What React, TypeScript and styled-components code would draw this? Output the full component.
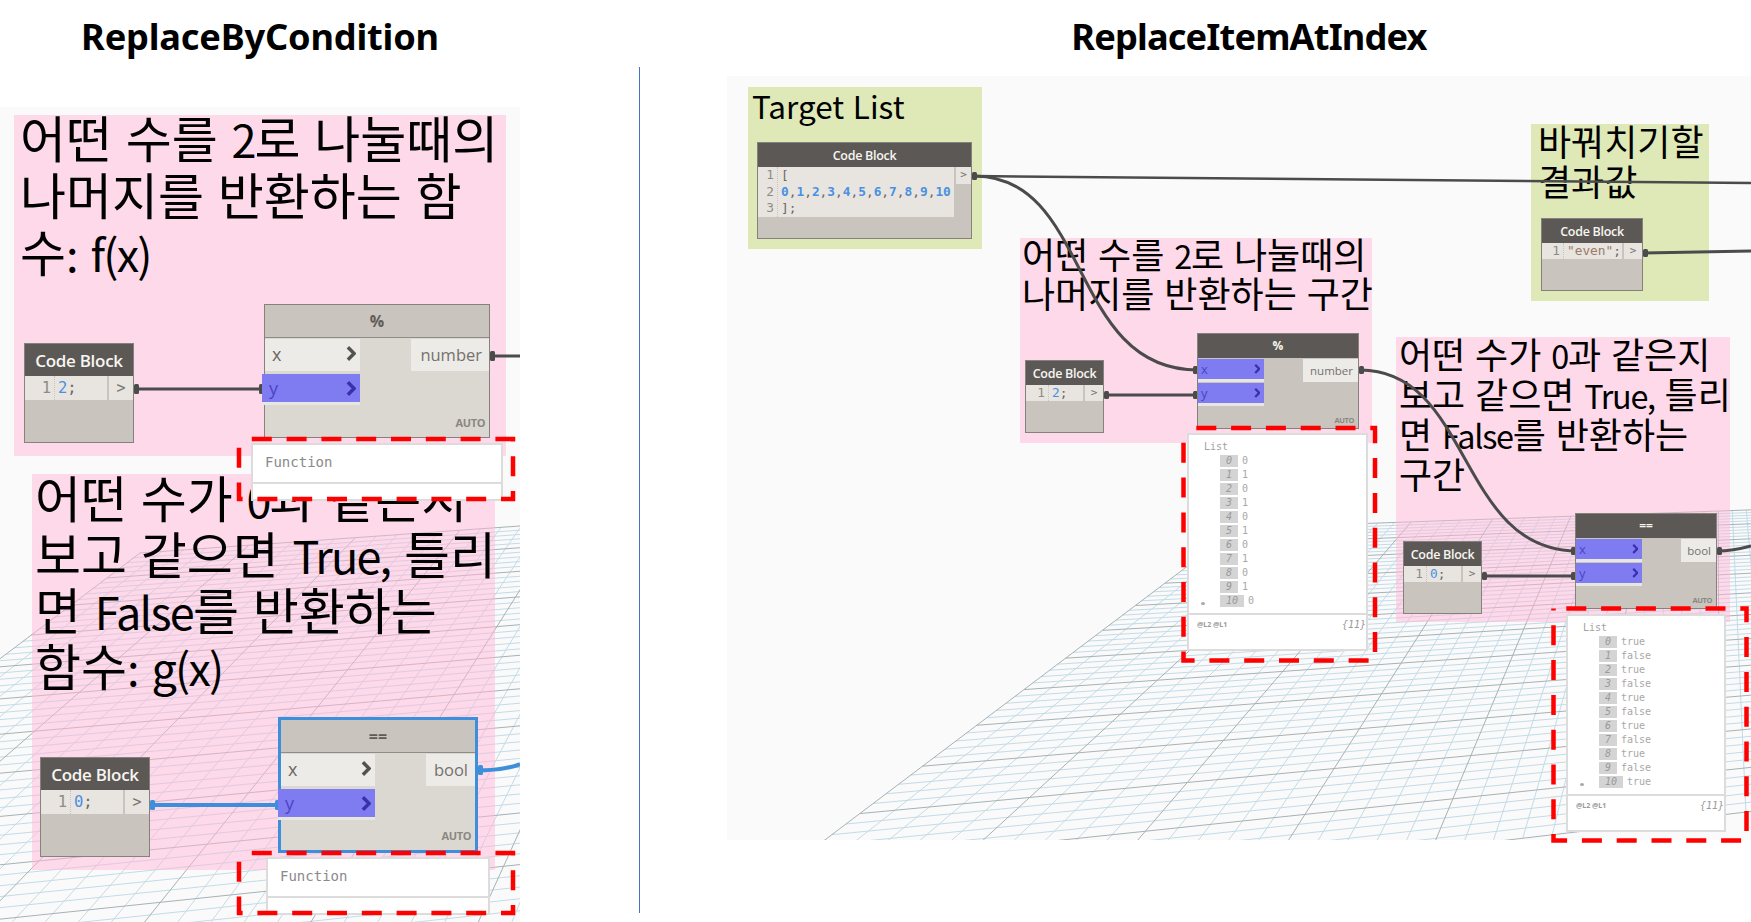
import React, { useMemo } from "react";
import styled, { createGlobalStyle } from "styled-components";

const GlobalStyle = createGlobalStyle`
  html, body { margin: 0; padding: 0; background: #ffffff; overflow: hidden; }
  #root { width: 1751px; height: 922px; overflow: hidden; }
`;

const UI = `"Open Sans", "Noto Sans CJK KR", sans-serif`;
const MONO = `"DejaVu Sans Mono", "Noto Sans CJK KR", monospace`;

const Page = styled.main`
  display: flex;
  width: 1751px;
  height: 922px;
  background: #fff;
`;
const Column = styled.section<{ $w: number }>`
  display: flex;
  flex-direction: column;
  flex: none;
  width: ${(p) => p.$w}px;
`;
const TitleBar = styled.header<{ $h: number; $pl?: number }>`
  flex: none;
  height: ${(p) => p.$h}px;
  padding: 11px 0 0 ${(p) => p.$pl ?? 0}px;
  box-sizing: border-box;
`;
const Title = styled.h1<{ $ls: number }>`
  margin: 0;
  font: 700 36.2px/50px "Noto Sans", sans-serif;
  color: #000;
  text-align: center;
  letter-spacing: ${(p) => p.$ls}px;
`;
const Divider = styled.div`
  flex: none;
  width: 1px;
  height: 846px;
  margin: 67px 87px 0 119px;
  background: #4472c4;
`;
const Canvas = styled.div<{ $h: number }>`
  position: relative;
  flex: none;
  height: ${(p) => p.$h}px;
  background: #fafafa;
`;
const Layer = styled.svg<{ $top?: boolean }>`
  position: absolute;
  inset: 0;
  width: 100%;
  height: 100%;
  pointer-events: none;
  overflow: ${(p) => (p.$top ? "visible" : "hidden")};
  z-index: ${(p) => (p.$top ? 5 : 2)};
`;
const Note = styled.div<{ $x: number; $y: number; $w: number; $h: number; $green?: boolean }>`
  position: absolute;
  left: ${(p) => p.$x}px;
  top: ${(p) => p.$y}px;
  width: ${(p) => p.$w}px;
  height: ${(p) => p.$h}px;
  background: ${(p) => (p.$green ? "#dfe9b7" : "rgba(255,184,216,0.5)")};
  z-index: 1;
`;
const NoteText = styled.div<{ $fs: number; $lh: number; $pl: number; $mt: number }>`
  margin-top: ${(p) => p.$mt}px;
  padding-left: ${(p) => p.$pl}px;
  font-family: "Noto Sans CJK KR", sans-serif;
  font-size: ${(p) => p.$fs}px;
  line-height: ${(p) => p.$lh}px;
  word-spacing: 0.05em;
  color: #000;
  white-space: nowrap;
`;
const NoteLine = styled.div`
  height: 1lh;
`;
const Latin = styled.span`
  font-size: 0.9em;
  line-height: 0;
  letter-spacing: -0.04em;
`;

/* ---- Code block node ---- */
const CodeShell = styled.div<{ $x: number; $y: number; $w: number; $h: number }>`
  position: absolute;
  left: ${(p) => p.$x}px;
  top: ${(p) => p.$y}px;
  width: ${(p) => p.$w}px;
  height: ${(p) => p.$h}px;
  box-sizing: border-box;
  display: flex;
  flex-direction: column;
  background: #c9c5be;
  border: 1.5px solid #85827d;
  z-index: 3;
`;
const CodeHead = styled.div<{ $h: number; $fs: number }>`
  flex: none;
  height: ${(p) => p.$h}px;
  background: #5c5855;
  color: #f7f5f0;
  font: 600 ${(p) => p.$fs}px/${(p) => p.$h + 1}px ${UI};
  letter-spacing: -0.3px;
  text-align: center;
`;
const CodeRow = styled.div`
  display: flex;
  align-items: flex-start;
`;
const Editor = styled.div<{ $fs: number; $lh: number; $mr: number }>`
  flex: 1;
  margin-right: ${(p) => p.$mr}px;
  display: flex;
  background: #e8e4e0;
  font: 400 ${(p) => p.$fs}px/${(p) => p.$lh}px ${MONO};
`;
const Gutter = styled.div<{ $w: number }>`
  flex: none;
  width: ${(p) => p.$w}px;
  padding-right: 3px;
  box-sizing: border-box;
  text-align: right;
  color: #8f8b85;
  border-right: 1px dotted #c8c4be;
`;
const Code = styled.div`
  padding-left: 3px;
  color: #6b6763;
  white-space: pre;
`;
const Num = styled.span`
  color: #4a90e2;
`;
const BoldNum = styled(Num)`
  font-weight: 600;
`;
const Str = styled.span`
  color: #9a7b66;
`;
const RunButton = styled.div<{ $w: number; $lh: number; $fs: number }>`
  flex: none;
  width: ${(p) => p.$w}px;
  height: ${(p) => p.$lh}px;
  background: #e8e4e0;
  color: #77736e;
  text-align: center;
  font: 400 ${(p) => p.$fs}px/${(p) => p.$lh}px ${MONO};
`;

/* ---- Function node ---- */
const FnShell = styled.div<{
  $x: number; $y: number; $w: number; $h: number; $dark?: boolean; $selected?: boolean;
}>`
  position: absolute;
  left: ${(p) => p.$x}px;
  top: ${(p) => p.$y}px;
  width: ${(p) => p.$w}px;
  height: ${(p) => p.$h}px;
  box-sizing: border-box;
  display: flex;
  flex-direction: column;
  background: ${(p) => (p.$dark ? "#c9c5be" : "#dbd8d2")};
  border: ${(p) => (p.$selected ? "3px solid #3d8fdc" : "1.5px solid #85827d")};
  z-index: 3;
`;
const FnHead = styled.div<{ $h: number; $dark?: boolean; $fs: number }>`
  flex: none;
  height: ${(p) => p.$h}px;
  background: ${(p) => (p.$dark ? "#5c5855" : "#c9c5be")};
  border-bottom: ${(p) => (p.$dark ? "none" : "1.5px solid #8f8c86")};
  box-sizing: border-box;
  color: ${(p) => (p.$dark ? "#f7f5f0" : "#5f5b57")};
  font: 700 ${(p) => p.$fs}px/${(p) => p.$h}px ${UI};
  text-align: center;
`;
const FnBody = styled.div<{ $pt: number }>`
  flex: 1;
  position: relative;
  display: flex;
  justify-content: space-between;
  align-items: flex-start;
  padding-top: ${(p) => p.$pt}px;
`;
const Inputs = styled.div<{ $w: number; $big?: boolean }>`
  flex: none;
  width: ${(p) => p.$w}px;
  display: flex;
  flex-direction: column;
  gap: ${(p) => (p.$big ? 3 : 1)}px;
`;
const Port = styled.div<{ $active?: boolean; $h: number; $fs: number; $big?: boolean }>`
  display: flex;
  align-items: center;
  justify-content: space-between;
  box-sizing: content-box;
  height: ${(p) => p.$h}px;
  margin-left: ${(p) => (p.$active && p.$big ? -3 : 0)}px;
  padding: 0 4px 0 ${(p) => (p.$big ? 7 : 3)}px;
  background: ${(p) => (p.$active ? "#7f7cf2" : "#ecebe7")};
  border-bottom: 3px solid ${(p) => (p.$active ? "#e8e6e1" : "#ecebe7")};
  color: ${(p) => (p.$active ? "#4b45c4" : "#6c6864")};
  font: 400 ${(p) => p.$fs}px/1 ${UI};
`;
const Chevron = styled.svg<{ $active?: boolean }>`
  flex: none;
  color: ${(p) => (p.$active ? "#3a30ad" : "#55524e")};
`;
const OutPort = styled.div<{ $w: number; $h: number; $fs: number; $big?: boolean }>`
  flex: none;
  width: ${(p) => p.$w}px;
  height: ${(p) => p.$h}px;
  box-sizing: border-box;
  padding-right: ${(p) => (p.$big ? 7 : 5)}px;
  background: #ecebe7;
  color: #75716d;
  font: 400 ${(p) => p.$fs}px/${(p) => p.$h}px ${UI};
  text-align: right;
`;
const Auto = styled.span<{ $fs: number; $b: number }>`
  position: absolute;
  right: 4px;
  bottom: ${(p) => p.$b}px;
  color: #8a8781;
  font: 700 ${(p) => p.$fs}px/1 ${UI};
  letter-spacing: -0.4px;
`;

/* ---- Preview bubbles ---- */
const Preview = styled.div<{ $x: number; $y: number; $w: number; $h: number }>`
  position: absolute;
  left: ${(p) => p.$x}px;
  top: ${(p) => p.$y}px;
  width: ${(p) => p.$w}px;
  height: ${(p) => p.$h}px;
  box-sizing: border-box;
  display: flex;
  flex-direction: column;
  background: #fff;
  border: 2px solid #dcdcdc;
  z-index: 4;
`;
const PreviewMain = styled.div<{ $h: number }>`
  flex: none;
  height: ${(p) => p.$h}px;
  box-sizing: border-box;
  border-bottom: 2px solid #dcdcdc;
`;
const FnLabel = styled.div`
  padding-left: 12px;
  color: #8a8a8a;
  font: 400 14px/34px ${MONO};
`;
const ListHead = styled.div`
  padding: 5px 0 0 15px;
  color: #a3a3a3;
  font: 400 10px/14px ${MONO};
`;
const ListRow = styled.div`
  display: flex;
  align-items: center;
  height: 14px;
  color: #a8a8a8;
  font: 400 10px/14px ${MONO};
`;
const Slot = styled.div`
  flex: none;
  width: 31px;
  padding-left: 12px;
  box-sizing: border-box;
  display: flex;
  align-items: center;
`;
const Dot = styled.i`
  width: 4px;
  height: 3px;
  margin-top: 5px;
  border-radius: 50%;
  background: #a8a8a8;
`;
const Chip = styled.span<{ $wide?: boolean }>`
  flex: none;
  width: ${(p) => (p.$wide ? 24 : 18)}px;
  height: 12px;
  margin-right: 4px;
  background: #d4d4d4;
  color: #9a9a9a;
  font: italic 400 10px/12px ${MONO};
  text-align: center;
`;
const ListFoot = styled.div`
  display: flex;
  justify-content: space-between;
  align-items: center;
  padding: 4px 0 0 8px;
  color: #9a9a9a;
`;
const Levels = styled.span`
  font: 700 7px/12px ${UI};
`;
const Count = styled.span`
  font: italic 400 10px/12px ${MONO};
`;

/* ---- Helpers ---- */
type Pt = [number, number];

function groundPaths(a: Pt, b: Pt, c: Pt, d: Pt, nu: number, nv: number) {
  // unit square -> quad (u along a-b, v along a-d)
  const [x0, y0] = a, [x1, y1] = b, [x2, y2] = c, [x3, y3] = d;
  const dx1 = x1 - x2, dx2 = x3 - x2, dx3 = x0 - x1 + x2 - x3;
  const dy1 = y1 - y2, dy2 = y3 - y2, dy3 = y0 - y1 + y2 - y3;
  const den = dx1 * dy2 - dx2 * dy1;
  const g = (dx3 * dy2 - dx2 * dy3) / den;
  const h = (dx1 * dy3 - dx3 * dy1) / den;
  const A = x1 - x0 + g * x1, B = x3 - x0 + h * x3;
  const D = y1 - y0 + g * y1, E = y3 - y0 + h * y3;
  const map = (u: number, v: number) => {
    const w = g * u + h * v + 1;
    return `${((A * u + B * v + x0) / w).toFixed(1)} ${((D * u + E * v + y0) / w).toFixed(1)}`;
  };
  let minor = "", major = "";
  for (let i = 0; i <= nu; i++) {
    const s = `M${map(i / nu, 0)}L${map(i / nu, 1)}`;
    if (i % 5 === 0) major += s; else minor += s;
  }
  for (let j = 0; j <= nv; j++) {
    const s = `M${map(0, j / nv)}L${map(1, j / nv)}`;
    if (j % 5 === 0) major += s; else minor += s;
  }
  return { minor, major };
}

const Ground: React.FC<{ box: string; a: Pt; b: Pt; c: Pt; d: Pt }> = ({ box, a, b, c, d }) => {
  const { minor, major } = useMemo(() => groundPaths(a, b, c, d, 80, 60), [a, b, c, d]);
  return (
    <Layer viewBox={box} style={{ zIndex: 0 }}>
      <path d={minor} fill="none" stroke="#c3dbe8" strokeWidth="1" />
      <path d={major} fill="none" stroke="#a5b2b6" strokeWidth="1" />
    </Layer>
  );
};

const Wire: React.FC<{ d: string; c?: string; w?: number }> = ({ d, c = "#4b4b4b", w = 3 }) => (
  <path d={d} fill="none" stroke={c} strokeWidth={w} />
);
const Pin: React.FC<{ x: number; y: number; c?: string; h?: number }> = ({ x, y, c = "#4b4b4b", h = 10 }) => (
  <rect x={x} y={y - h / 2} width={5} height={h} rx={1.5} fill={c} />
);
const RedBox: React.FC<{ x1: number; y1: number; x2: number; y2: number }> = ({ x1, y1, x2, y2 }) => (
  <rect
    x={x1}
    y={y1}
    width={x2 - x1}
    height={y2 - y1}
    fill="none"
    stroke="#ff0000"
    strokeWidth="4.5"
    strokeDasharray="20 14.8"
    strokeDashoffset="22"
  />
);

const Arrow: React.FC<{ active?: boolean; s: number }> = ({ active, s }) => (
  <Chevron $active={active} width={s} height={s * 1.5} viewBox="0 0 8 12">
    <path d="M1.5 1 L6.5 6 L1.5 11" fill="none" stroke="currentColor" strokeWidth="2.8" />
  </Chevron>
);

type CodeProps = {
  x: number; y: number; w: number; h: number; big?: boolean; gutter: number; btn: number; mr?: number;
  nums: number[]; children: React.ReactNode;
};
const CodeNode: React.FC<CodeProps> = ({ x, y, w, h, big, gutter, btn, mr = 2, nums, children }) => {
  const lh = big ? 24 : nums.length > 1 ? 16.7 : 16;
  const fs = big ? 15.5 : 12.8;
  return (
    <CodeShell $x={x} $y={y} $w={w} $h={h}>
      <CodeHead $h={big ? 32 : 24} $fs={big ? 17 : 12.5}>Code Block</CodeHead>
      <CodeRow>
        <Editor $fs={fs} $lh={lh} $mr={mr}>
          <Gutter $w={gutter}>{nums.map((n) => <div key={n}>{n}</div>)}</Gutter>
          <Code>{children}</Code>
        </Editor>
        <RunButton $w={btn} $lh={lh} $fs={big ? 15 : 11}>&gt;</RunButton>
      </CodeRow>
    </CodeShell>
  );
};

type FnProps = {
  x: number; y: number; w: number; h: number; title: string; inputs: { n: string; on?: boolean }[];
  out: string; outW: number; big?: boolean; dark?: boolean; selected?: boolean; inW: number;
};
const FnNode: React.FC<FnProps> = ({ x, y, w, h, title, inputs, out, outW, big, dark, selected, inW }) => (
  <FnShell $x={x} $y={y} $w={w} $h={h} $dark={dark} $selected={selected}>
    <FnHead $h={big ? 33 : 24} $dark={dark} $fs={big ? 16 : 12}>{title}</FnHead>
    <FnBody $pt={1}>
      <Inputs $w={inW} $big={big}>
        {inputs.map((i) => (
          <Port
            key={i.n}
            $active={i.on}
            $big={big}
            $h={big ? (i.on ? 28 : 29) : 20}
            $fs={big ? 18 : 13}
          >
            {i.n}
            <Arrow active={i.on} s={big ? 10 : 6.5} />
          </Port>
        ))}
      </Inputs>
      <OutPort $big={big} $w={outW} $h={big ? 32 : 23} $fs={big ? 16.5 : 11.5}>{out}</OutPort>
      <Auto $fs={big ? 11 : 7.5} $b={big ? 9 : 4}>AUTO</Auto>
    </FnBody>
  </FnShell>
);

const FunctionBubble: React.FC<{ x: number; y: number; w: number; h: number }> = ({ x, y, w, h }) => (
  <Preview $x={x} $y={y} $w={w} $h={h}>
    <PreviewMain $h={39}>
      <FnLabel>Function</FnLabel>
    </PreviewMain>
  </Preview>
);

const ListBubble: React.FC<{ x: number; y: number; w: number; values: string[] }> = ({ x, y, w, values }) => (
  <Preview $x={x} $y={y} $w={w} $h={218}>
    <PreviewMain $h={180}>
      <ListHead>List</ListHead>
      {values.map((v, i) => (
        <ListRow key={i}>
          <Slot>{i === values.length - 1 && <Dot />}</Slot>
          <Chip $wide={i > 9}>{i}</Chip>
          {v}
        </ListRow>
      ))}
    </PreviewMain>
    <ListFoot>
      <Levels>@L2 @L1</Levels>
      <Count>{"{11}"}</Count>
    </ListFoot>
  </Preview>
);

const Lines: React.FC<{ fs: number; lh: number; pl: number; mt: number; lines: string[]; plain?: boolean }> = ({
  fs, lh, pl, mt, lines, plain,
}) => (
  <NoteText $fs={fs} $lh={lh} $pl={pl} $mt={mt}>
    {lines.map((l) => (
      <NoteLine key={l}>
        {plain
          ? l
          : l.split(/([A-Za-z0-9(),:]+)/).map((part, i) =>
              i % 2 === 1 ? <Latin key={i}>{part}</Latin> : part
            )}
      </NoteLine>
    ))}
  </NoteText>
);

const LEFT_BOX = "0 107 520 815";
const RIGHT_BOX = "727 76 1024 764";
const LX = 0, LY = 107, RX = 727, RY = 76;

const NUM = [0, 1, 0, 1, 0, 1, 0, 1, 0, 1, 0].map(String);
const BOOL = NUM.map((v) => (v === "0" ? "true" : "false"));

const L_A: Pt = [140, 553], L_B: Pt = [1645, 446], L_C: Pt = [2187, 794], L_D: Pt = [-615, 1123];
const R_A: Pt = [1238, 528], R_B: Pt = [2313, 490], R_C: Pt = [2700, 700], R_D: Pt = [699, 935];

export default function App() {
  return (
    <Page>
      <GlobalStyle />
      <Column $w={520}>
        <TitleBar $h={107}><Title $ls={-0.2}>ReplaceByCondition</Title></TitleBar>
        <Canvas $h={815}>
          <Ground box={LEFT_BOX} a={L_A} b={L_B} c={L_C} d={L_D} />

          <Note $x={14 - LX} $y={115 - LY} $w={492} $h={341}>
            <Lines fs={50} lh={57} pl={6} mt={-7} lines={["어떤 수를 2로 나눌때의", "나머지를 반환하는 함", "수: f(x)"]} />
          </Note>
          <Note $x={32 - LX} $y={474 - LY} $w={463} $h={396}>
            <Lines fs={50} lh={56} pl={3} mt={-6} lines={["어떤 수가 0과 같은지", "보고 같으면 True, 틀리", "면 False를 반환하는", "함수: g(x)"]} />
          </Note>

          <Layer viewBox={LEFT_BOX}>
            <Wire d="M134 389H262" />
            <Pin x={134} y={389} />
            <Pin x={259} y={389} />
            <Wire d="M490 356H520" />
            <Pin x={490} y={356} />
            <Wire d="M150 805H278" c="#3d8fdc" w={4} />
            <Pin x={150} y={805} c="#3d8fdc" />
            <Pin x={275} y={805} c="#3d8fdc" />
            <Wire d="M478 770C495 771 507 769 520 764" c="#3d8fdc" w={4} />
            <Pin x={478} y={770} c="#3d8fdc" />
          </Layer>

          <CodeNode x={24 - LX} y={343 - LY} w={110} h={100} big gutter={30} btn={24} nums={[1]}>
            <Num>2</Num>;
          </CodeNode>
          <FnNode
            x={264 - LX} y={304 - LY} w={226} h={134} big inW={95} outW={78}
            title="%" inputs={[{ n: "x" }, { n: "y", on: true }]} out="number"
          />
          <CodeNode x={40 - LX} y={757 - LY} w={110} h={100} big gutter={30} btn={24} nums={[1]}>
            <Num>0</Num>;
          </CodeNode>
          <FnNode
            x={278 - LX} y={717 - LY} w={200} h={136} big selected inW={94} outW={49}
            title="==" inputs={[{ n: "x" }, { n: "y", on: true }]} out="bool"
          />

          <FunctionBubble x={251 - LX} y={443 - LY} w={252} h={58} />
          <FunctionBubble x={266 - LX} y={857 - LY} w={224} h={58} />

          <Layer $top viewBox={LEFT_BOX}>
            <RedBox x1={239} y1={439} x2={513} y2={499} />
            <RedBox x1={239} y1={853} x2={513} y2={913} />
          </Layer>
        </Canvas>
      </Column>

      <Divider />

      <Column $w={1024}>
        <TitleBar $h={76} $pl={20}><Title $ls={-0.85}>ReplaceItemAtIndex</Title></TitleBar>
        <Canvas $h={764}>
          <Ground box={RIGHT_BOX} a={R_A} b={R_B} c={R_C} d={R_D} />

          <Note $green $x={748 - RX} $y={87 - RY} $w={234} $h={162}>
            <Lines plain fs={31.5} lh={40} pl={4} mt={-2} lines={["Target List"]} />
          </Note>
          <Note $green $x={1531 - RX} $y={124 - RY} $w={178} $h={177}>
            <Lines fs={36} lh={40} pl={7} mt={-4} lines={["바꿔치기할", "결과값"]} />
          </Note>
          <Note $x={1020 - RX} $y={238 - RY} $w={352} $h={205}>
            <Lines fs={36} lh={39} pl={2} mt={-4} lines={["어떤 수를 2로 나눌때의", "나머지를 반환하는 구간"]} />
          </Note>
          <Note $x={1396 - RX} $y={337 - RY} $w={334} $h={285}>
            <Lines fs={36} lh={40} pl={3} mt={-4} lines={["어떤 수가 0과 같은지", "보고 같으면 True, 틀리", "면 False를 반환하는", "구간"]} />
          </Note>

          <Layer viewBox={RIGHT_BOX}>
            <Wire d="M974 176L1751 183" w={2.5} />
            <Wire d="M974 176C1092 176 1068 370 1198 370" />
            <Wire d="M1104 395H1198" />
            <Wire d="M1644 253L1751 251" />
            <Wire d="M1360 370C1472 370 1458 551 1577 551" />
            <Wire d="M1482 576H1577" />
            <Wire d="M1717 551C1730 551 1740 549 1751 546" />
            <Pin x={972} y={176} h={8} />
            <Pin x={1193} y={370} h={8} />
            <Pin x={1193} y={395} h={8} />
            <Pin x={1104} y={395} h={8} />
            <Pin x={1643} y={253} h={8} />
            <Pin x={1359} y={370} h={8} />
            <Pin x={1571} y={551} h={8} />
            <Pin x={1571} y={576} h={8} />
            <Pin x={1482} y={576} h={8} />
            <Pin x={1717} y={551} h={8} />
          </Layer>

          <CodeNode x={757 - RX} y={142 - RY} w={215} h={97} gutter={20} btn={15} nums={[1, 2, 3]}>
            {"["}
            <br />
            <BoldNum>0</BoldNum>,<BoldNum>1</BoldNum>,<BoldNum>2</BoldNum>,<BoldNum>3</BoldNum>,<BoldNum>4</BoldNum>,<BoldNum>5</BoldNum>,<BoldNum>6</BoldNum>,<BoldNum>7</BoldNum>,<BoldNum>8</BoldNum>,<BoldNum>9</BoldNum>,<BoldNum>10</BoldNum>
            <br />
            {"];"}
          </CodeNode>
          <CodeNode x={1541 - RX} y={218 - RY} w={102} h={73} gutter={22} btn={18} nums={[1]}>
            <Str>{'"even"'}</Str>;
          </CodeNode>
          <CodeNode x={1025 - RX} y={360 - RY} w={79} h={73} gutter={23} btn={18} nums={[1]}>
            <Num>2</Num>;
          </CodeNode>
          <CodeNode x={1403 - RX} y={541 - RY} w={79} h={73} gutter={23} btn={18} nums={[1]}>
            <Num>0</Num>;
          </CodeNode>
          <FnNode
            x={1197 - RX} y={333 - RY} w={162} h={96} dark inW={66} outW={55}
            title="%" inputs={[{ n: "x", on: true }, { n: "y", on: true }]} out="number"
          />
          <FnNode
            x={1575 - RX} y={513 - RY} w={142} h={96} dark inW={66} outW={35}
            title="==" inputs={[{ n: "x", on: true }, { n: "y", on: true }]} out="bool"
          />

          <ListBubble x={1187 - RX} y={433 - RY} w={181} values={NUM} />
          <ListBubble x={1566 - RX} y={614 - RY} w={160} values={BOOL} />

          <Layer $top viewBox={RIGHT_BOX}>
            <RedBox x1={1183.5} y1={428} x2={1375} y2={660.5} />
            <RedBox x1={1553.5} y1={608.5} x2={1746.5} y2={840.5} />
          </Layer>
        </Canvas>
      </Column>
    </Page>
  );
}
